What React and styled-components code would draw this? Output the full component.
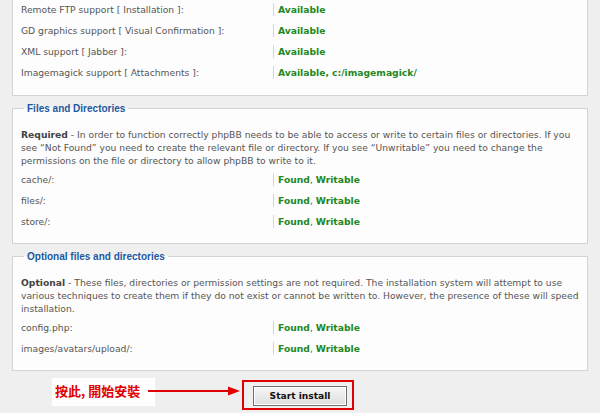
import styled, { createGlobalStyle } from "styled-components";

const GlobalStyle = createGlobalStyle`
  html, body {
    margin: 0;
    padding: 0;
    background: #efefef;
  }
  body {
    font-family: "DejaVu Sans", Verdana, sans-serif;
  }
`;

const requirements = [
  { label: "Remote FTP support [ Installation ]:", value: "Available" },
  { label: "GD graphics support [ Visual Confirmation ]:", value: "Available" },
  { label: "XML support [ Jabber ]:", value: "Available" },
  { label: "Imagemagick support [ Attachments ]:", value: "Available, c:/imagemagick/" },
];

const requiredDirs = ["cache/:", "files/:", "store/:"];
const optionalDirs = ["config.php:", "images/avatars/upload/:"];

export default function App() {
  return (
    <>
      <GlobalStyle />
      <Page>
        <Panel $cut>
          {requirements.map((r) => (
            <Row key={r.label}>
              <Label>{r.label}</Label>
              <Value>
                <Ok>{r.value}</Ok>
              </Value>
            </Row>
          ))}
        </Panel>

        <Panel>
          <Legend>Files and Directories</Legend>
          <Explain>
            <strong>Required</strong> - In order to function correctly phpBB needs to be able to access or write to certain files or directories. If you see “Not Found” you need to create the relevant file or directory. If you see “Unwritable” you need to change the permissions on the file or directory to allow phpBB to write to it.
          </Explain>
          {requiredDirs.map((d) => (
            <DirRow key={d} name={d} />
          ))}
        </Panel>

        <Panel>
          <Legend>Optional files and directories</Legend>
          <Explain>
            <strong>Optional</strong> - These files, directories or permission settings are not required. The installation system will attempt to use various techniques to create them if they do not exist or cannot be written to. However, the presence of these will speed installation.
          </Explain>
          {optionalDirs.map((d) => (
            <DirRow key={d} name={d} />
          ))}
        </Panel>

        <Footer>
          <Note>按此, 開始安裝</Note>
          <Arrow width="92" height="12" viewBox="0 0 92 12">
            <line x1="0" y1="6" x2="82" y2="6" stroke="#e00000" strokeWidth="2" />
            <polygon points="80,1.5 92,6 80,10.5" fill="#e00000" />
          </Arrow>
          <Frame>
            <Button type="button">Start install</Button>
          </Frame>
        </Footer>
      </Page>
    </>
  );
}

function DirRow({ name }) {
  return (
    <Row>
      <Label>{name}</Label>
      <Value>
        <Ok>Found</Ok>, <Ok>Writable</Ok>
      </Value>
    </Row>
  );
}

const Page = styled.div`
  width: 600px;
  height: 413px;
  box-sizing: border-box;
  padding: 0 12px;
  overflow: hidden;
  font-size: 9.2px;
  color: #555;
`;

const Panel = styled.fieldset`
  margin: ${(p) => (p.$cut ? "-1px 0 0" : "6px 0 0")};
  padding: ${(p) => (p.$cut ? "0 8px 12px" : "13px 8px 11px")};
  border: 1px solid #d3d3d3;
  border-top: ${(p) => (p.$cut ? "none" : "1px solid #d3d3d3")};
  background: #fdfdfd;
  min-width: 0;
`;

const Legend = styled.legend`
  margin-left: 3px;
  padding: 0 3px;
  font-family: "Liberation Sans", Arial, sans-serif;
  font-weight: bold;
  font-size: 10px;
  line-height: 13px;
  color: #1b58a0;
`;

const Explain = styled.p`
  margin: 0 0 2px;
  line-height: 13px;

  strong {
    color: #444;
  }
`;

const Row = styled.div`
  display: grid;
  grid-template-columns: 252px 1fr;
  padding: 4px 0;
  line-height: 13px;
`;

const Label = styled.span`
  color: #555;
`;

const Value = styled.span`
  border-left: 1px solid #d6d6d6;
  padding-left: 4px;
  color: #555;
`;

const Ok = styled.b`
  color: #228822;
`;

const Footer = styled.div`
  display: flex;
  align-items: flex-start;
  margin-top: 7px;
  padding-left: 40px;
`;

const Note = styled.div`
  width: 100px;
  height: 28px;
  padding-left: 3px;
  background: #fff;
  font-family: "Noto Sans CJK TC", "Noto Sans CJK SC", sans-serif;
  font-weight: bold;
  font-size: 13px;
  line-height: 26px;
  color: #e00000;
  white-space: nowrap;
`;

const Arrow = styled.svg`
  display: block;
  margin: 7px 0 0 -7px;
`;

const Frame = styled.div`
  margin: 2px 0 0 2px;
  border: 2px solid #e00000;
  padding: 4px 0 0 9px;
  width: 99px;
  height: 22px;
`;

const Button = styled.button`
  display: block;
  width: 94px;
  height: 20px;
  padding: 0;
  border: 1px solid #6f6f6f;
  background: linear-gradient(#f6f6f6, #dedede);
  box-shadow: inset 0 0 0 1px #fff;
  font-family: "DejaVu Sans", Verdana, sans-serif;
  font-weight: bold;
  font-size: 9.1px;
  color: #111;
`;
